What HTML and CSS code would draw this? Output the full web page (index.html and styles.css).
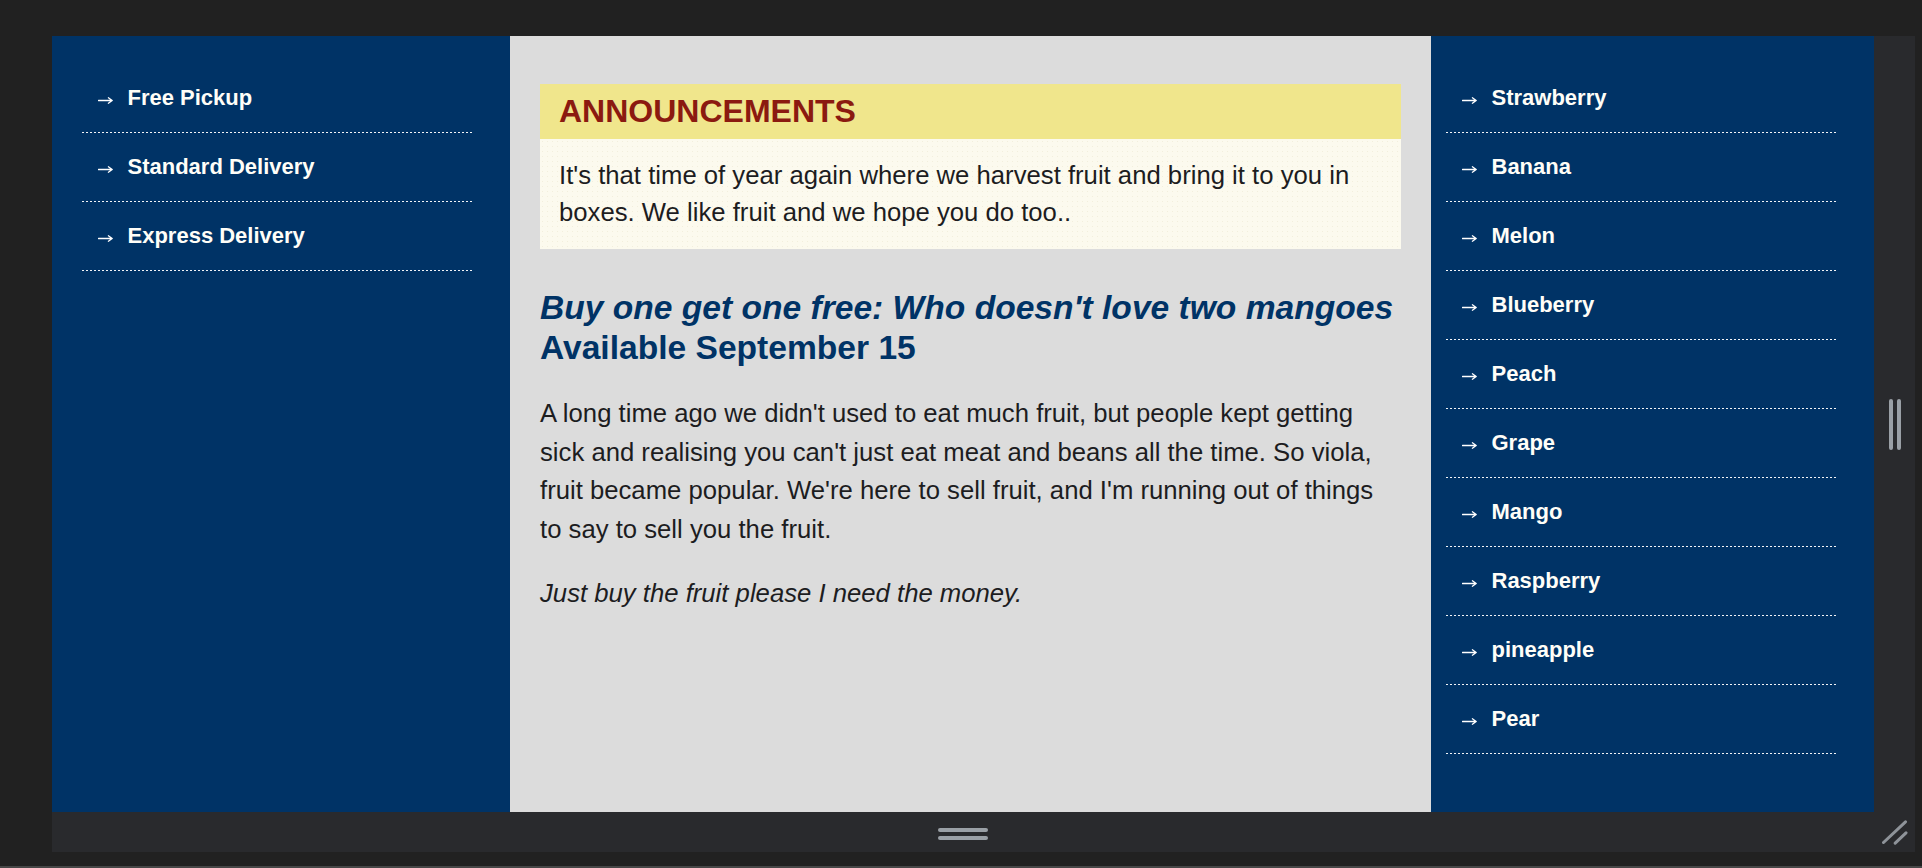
FILE: index.html
```html
<!DOCTYPE html>
<html lang="en">
<head>
<meta charset="utf-8">
<title>Fruit Shop</title>
<link rel="stylesheet" href="styles.css">
</head>
<body>
<div class="stage">
  <div class="frame">
    <div class="page">
      <nav class="col col-left">
        <ul class="menu">
          <li><svg class="arr" width="15" height="7" viewBox="0 0 15 7"><path d="M0.5 3.5H14M10.4 0.8L14.2 3.5L10.4 6.2"/></svg>Free Pickup</li>
          <li><svg class="arr" width="15" height="7" viewBox="0 0 15 7"><path d="M0.5 3.5H14M10.4 0.8L14.2 3.5L10.4 6.2"/></svg>Standard Delivery</li>
          <li><svg class="arr" width="15" height="7" viewBox="0 0 15 7"><path d="M0.5 3.5H14M10.4 0.8L14.2 3.5L10.4 6.2"/></svg>Express Delivery</li>
        </ul>
      </nav>
      <main class="col col-main">
        <section class="notice">
          <h2 class="notice-title">ANNOUNCEMENTS</h2>
          <p class="notice-body">It's that time of year again where we harvest fruit and bring it to you in boxes. We like fruit and we hope you do too..</p>
        </section>
        <h1 class="headline"><em class="headline-offer">Buy one get one free: Who doesn't love two mangoes</em><span class="headline-date">Available September 15</span></h1>
        <p class="copy">A long time ago we didn't used to eat much fruit, but people kept getting sick and realising you can't just eat meat and beans all the time. So viola, fruit became popular. We're here to sell fruit, and I'm running out of things to say to sell you the fruit.</p>
        <p class="copy copy-plea">Just buy the fruit please I need the money.</p>
      </main>
      <nav class="col col-right">
        <ul class="menu">
          <li><svg class="arr" width="15" height="7" viewBox="0 0 15 7"><path d="M0.5 3.5H14M10.4 0.8L14.2 3.5L10.4 6.2"/></svg>Strawberry</li>
          <li><svg class="arr" width="15" height="7" viewBox="0 0 15 7"><path d="M0.5 3.5H14M10.4 0.8L14.2 3.5L10.4 6.2"/></svg>Banana</li>
          <li><svg class="arr" width="15" height="7" viewBox="0 0 15 7"><path d="M0.5 3.5H14M10.4 0.8L14.2 3.5L10.4 6.2"/></svg>Melon</li>
          <li><svg class="arr" width="15" height="7" viewBox="0 0 15 7"><path d="M0.5 3.5H14M10.4 0.8L14.2 3.5L10.4 6.2"/></svg>Blueberry</li>
          <li><svg class="arr" width="15" height="7" viewBox="0 0 15 7"><path d="M0.5 3.5H14M10.4 0.8L14.2 3.5L10.4 6.2"/></svg>Peach</li>
          <li><svg class="arr" width="15" height="7" viewBox="0 0 15 7"><path d="M0.5 3.5H14M10.4 0.8L14.2 3.5L10.4 6.2"/></svg>Grape</li>
          <li><svg class="arr" width="15" height="7" viewBox="0 0 15 7"><path d="M0.5 3.5H14M10.4 0.8L14.2 3.5L10.4 6.2"/></svg>Mango</li>
          <li><svg class="arr" width="15" height="7" viewBox="0 0 15 7"><path d="M0.5 3.5H14M10.4 0.8L14.2 3.5L10.4 6.2"/></svg>Raspberry</li>
          <li><svg class="arr" width="15" height="7" viewBox="0 0 15 7"><path d="M0.5 3.5H14M10.4 0.8L14.2 3.5L10.4 6.2"/></svg>pineapple</li>
          <li><svg class="arr" width="15" height="7" viewBox="0 0 15 7"><path d="M0.5 3.5H14M10.4 0.8L14.2 3.5L10.4 6.2"/></svg>Pear</li>
        </ul>
      </nav>
    </div>
    <div class="vgrip"><span class="vbar"></span><span class="vbar"></span></div>
    <div class="hgrip"><div class="hbars"><span class="hbar"></span><span class="hbar"></span></div></div>
    <div class="corner">
      <svg width="26" height="26" viewBox="0 0 26 26"><path d="M1.5 22.5L23.5 1.8M13.2 23.2L24 12.8"/></svg>
    </div>
  </div>
</div>
<div class="floor"></div>
</body>
</html>
```

FILE: styles.css
```css
html, body {
  margin: 0;
  height: 868px;
  overflow: hidden;
  background: #212121;
  font-family: "Liberation Sans", Arial, Helvetica, sans-serif;
}

.stage {
  padding: 36px 7px 0 52px;
}

.frame {
  width: 1863px;
  height: 816px;
  background: #292a2d;
  display: grid;
  grid-template-columns: 1822px 41px;
  grid-template-rows: 776px 40px;
}

.page {
  display: flex;
  overflow: hidden;
}

.col {
  box-sizing: border-box;
  height: 776px;
}

.col-left {
  width: 458px;
  background: #003366;
  padding: 28px 38px 0 30px;
}

.col-main {
  width: 921px;
  background: #dcdcdc;
  padding: 48px 30px 0;
}

.col-right {
  width: 443px;
  background: #003366;
  padding: 28px 37px 0 15px;
}

.menu {
  list-style: none;
  margin: 0;
  padding: 0;
}

.menu li {
  padding: 21px 0 23px 16px;
  line-height: 25px;
  font-size: 22px;
  font-weight: bold;
  color: #fffef8;
  white-space: nowrap;
  background-image: linear-gradient(to right, #f2f4f7 2px, transparent 2px);
  background-size: 4px 1px;
  background-repeat: repeat-x;
  background-position: left bottom;
}

.arr {
  vertical-align: 1px;
  margin-right: 14.5px;
}

.arr path {
  fill: none;
  stroke: #ffffff;
  stroke-width: 1.3;
  stroke-linecap: round;
  stroke-linejoin: round;
}

.notice-title {
  margin: 0;
  background: #f0e68c;
  color: #8b1a10;
  font-size: 32px;
  line-height: 37px;
  font-weight: bold;
  padding: 9px 19px;
}

.notice-body {
  margin: 0;
  padding: 18px 19px;
  font-size: 25.7px;
  line-height: 37px;
  color: #1d1d1f;
  background-color: #fcfaee;
  background-image: radial-gradient(circle, rgba(200, 190, 140, 0.18) 0.6px, transparent 0.8px);
  background-size: 5px 5px;
}

.headline {
  margin: 39px 0 0;
  font-size: 33.6px;
  line-height: 40.3px;
  font-weight: bold;
  color: #003366;
}

.headline-offer {
  display: block;
  white-space: nowrap;
}

.headline-date {
  display: block;
}

.copy {
  margin: 25.7px 0;
  font-size: 25.7px;
  line-height: 38.4px;
  color: #1d1d1f;
}

.copy-plea {
  font-style: italic;
}

.vgrip {
  display: flex;
  justify-content: center;
  align-items: center;
  gap: 4px;
}

.vbar {
  width: 4px;
  height: 51px;
  background: #9aa0a6;
  border-radius: 2px;
}

.hgrip {
  display: flex;
  justify-content: center;
  padding-top: 16px;
}

.hbars {
  display: flex;
  flex-direction: column;
  gap: 4px;
}

.hbar {
  width: 50px;
  height: 4px;
  background: #9aa0a6;
  border-radius: 2px;
}

.corner {
  padding: 8px 0 0 8px;
}

.corner path {
  fill: none;
  stroke: #8e9399;
  stroke-width: 3;
  stroke-linecap: round;
}

.floor {
  margin-top: 14px;
  height: 2px;
  background: #474747;
}
```
